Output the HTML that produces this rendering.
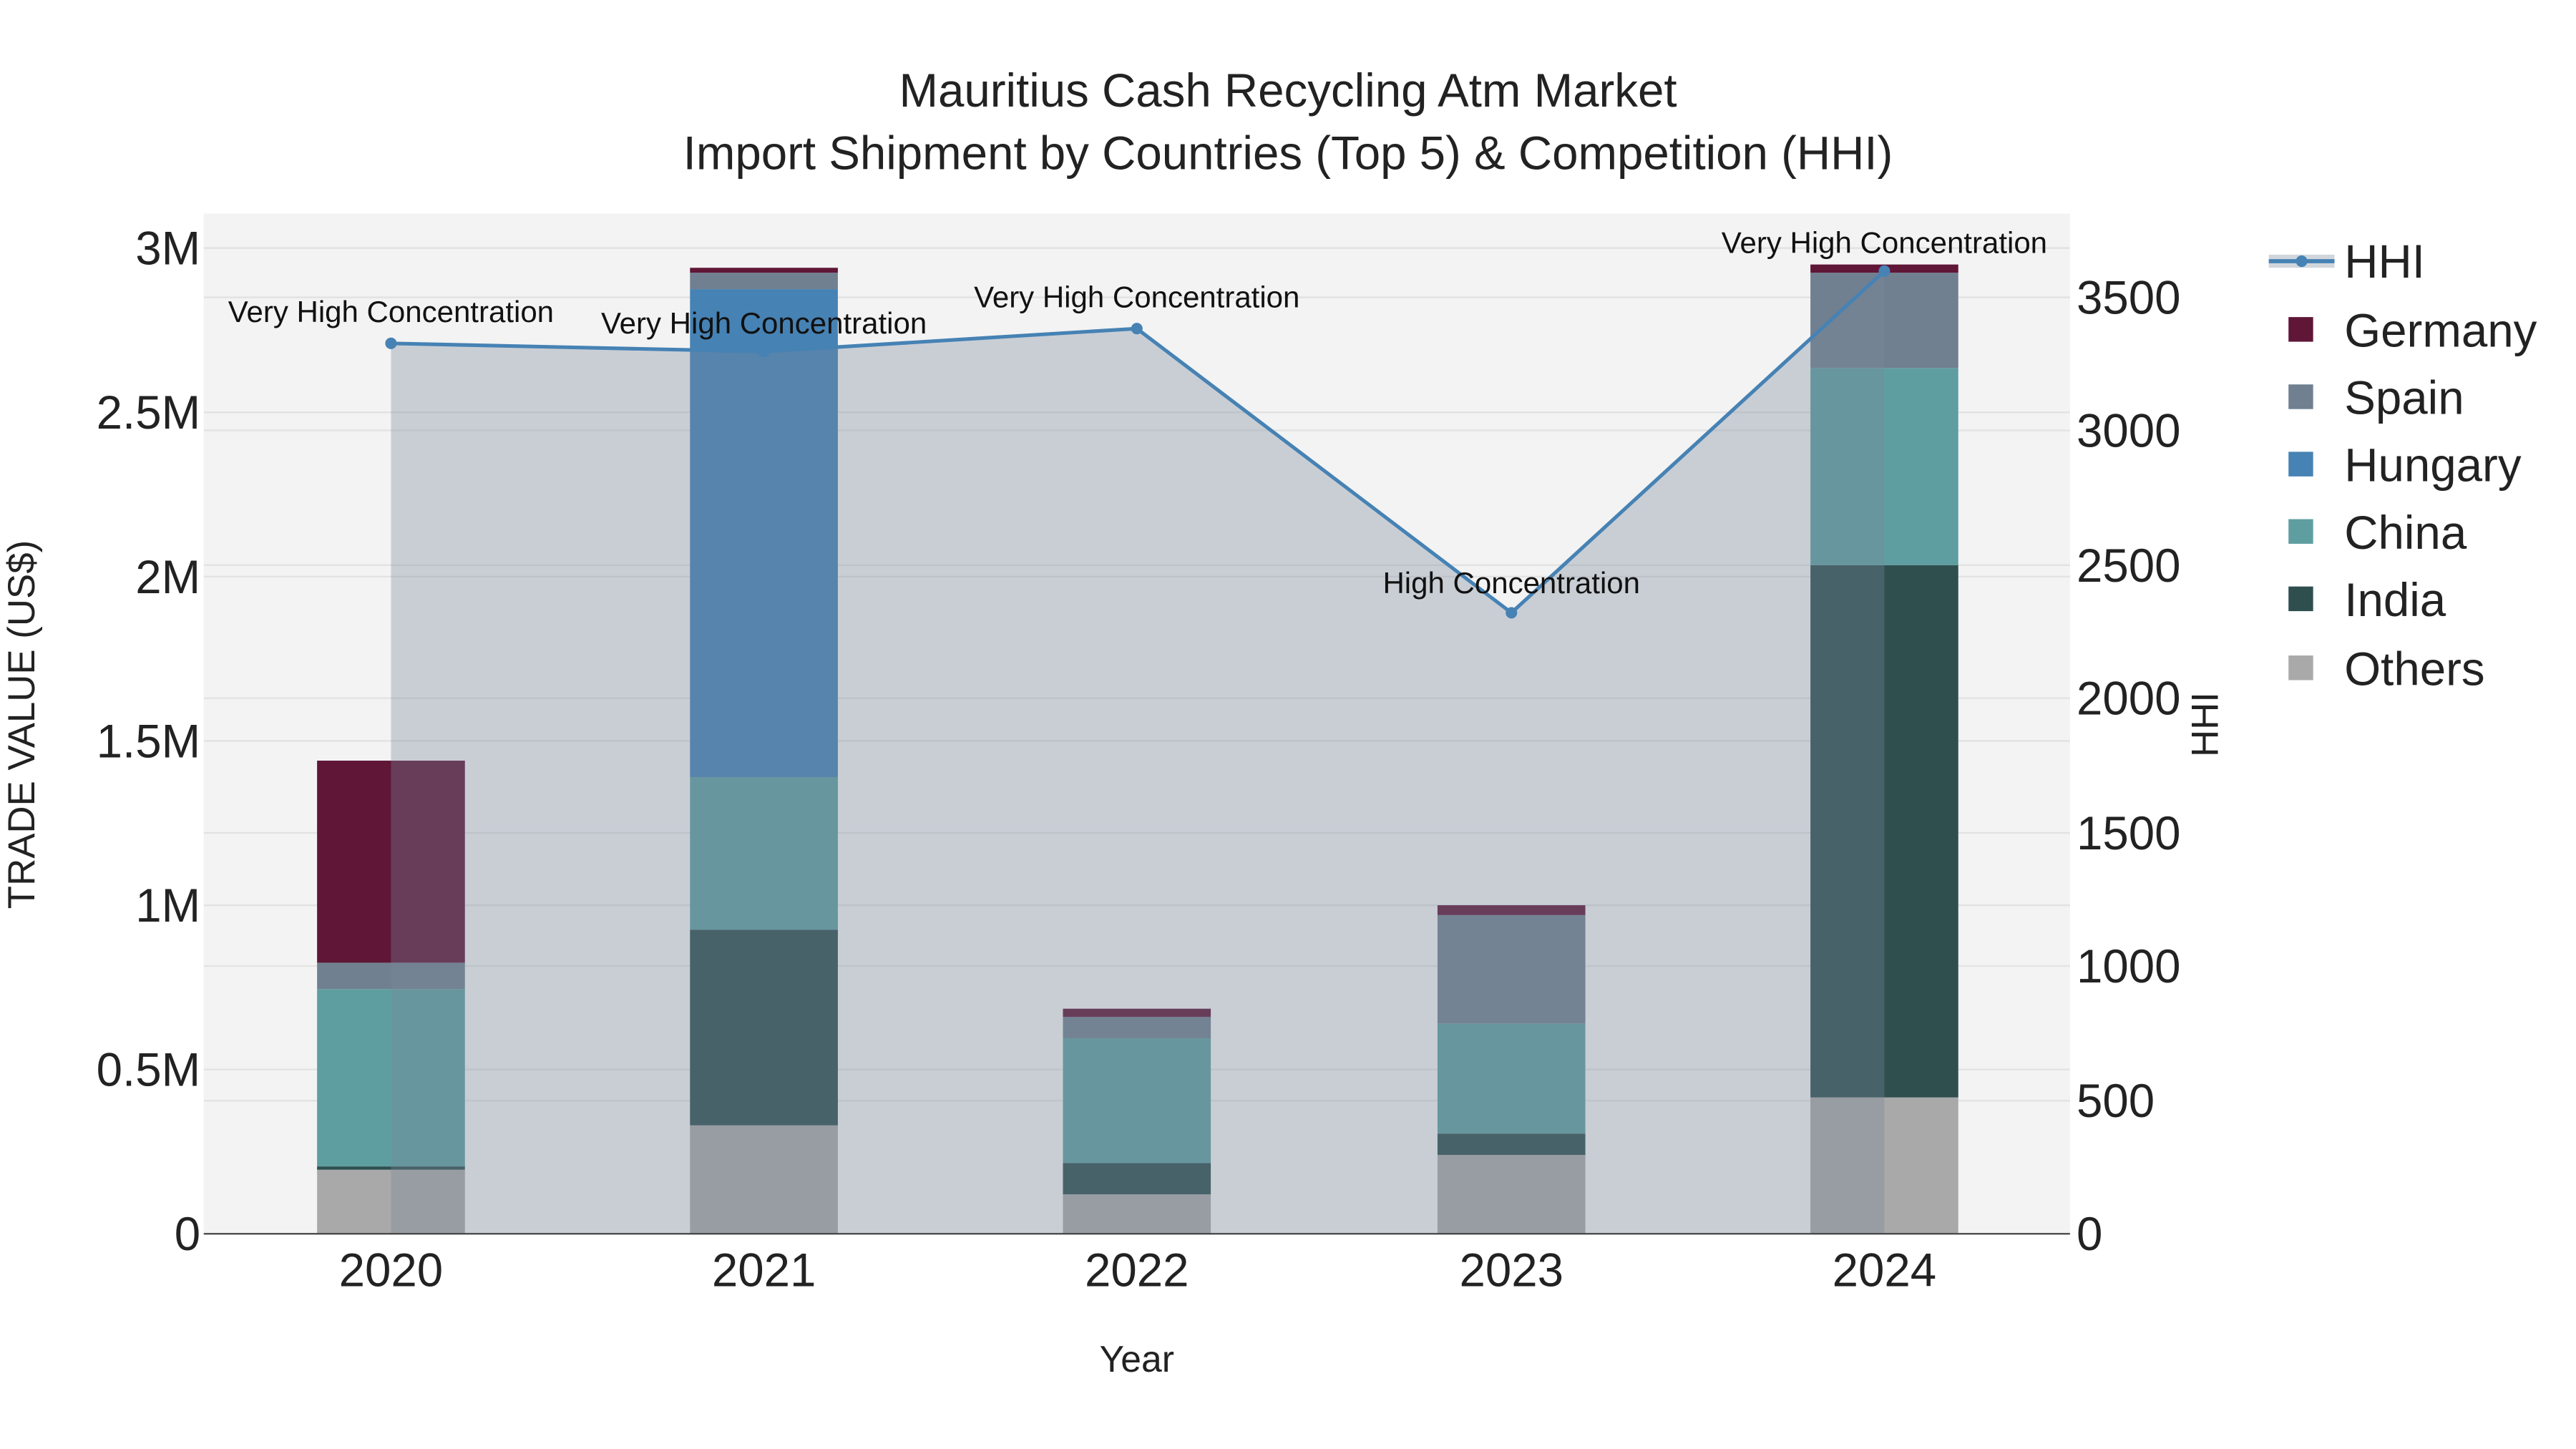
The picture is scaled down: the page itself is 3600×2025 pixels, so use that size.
<!DOCTYPE html>
<html><head><meta charset="utf-8"><style>
html,body{margin:0;padding:0;background:#fff;}
svg{display:block;font-family:"Liberation Sans",Arial,sans-serif;}
</style></head><body>
<svg width="3600" height="2025" viewBox="0 0 1568 882" preserveAspectRatio="none" xmlns="http://www.w3.org/2000/svg">
<rect x="0" y="0" width="1568" height="882" fill="#fff"/>
<rect x="124" y="130" width="1136" height="621" fill="#f3f3f3"/>
<g stroke="#e2e2e2" stroke-width="1">
<line x1="124" x2="1260" y1="651" y2="651"/><line x1="124" x2="1260" y1="551" y2="551"/>
<line x1="124" x2="1260" y1="451" y2="451"/><line x1="124" x2="1260" y1="351" y2="351"/>
<line x1="124" x2="1260" y1="251" y2="251"/><line x1="124" x2="1260" y1="151" y2="151"/>
<line x1="124" x2="1260" y1="670" y2="670"/><line x1="124" x2="1260" y1="588" y2="588"/>
<line x1="124" x2="1260" y1="507" y2="507"/><line x1="124" x2="1260" y1="425" y2="425"/>
<line x1="124" x2="1260" y1="344" y2="344"/><line x1="124" x2="1260" y1="262" y2="262"/>
<line x1="124" x2="1260" y1="181" y2="181"/>
</g>
<g>
<rect x="193" y="712" width="90" height="39" fill="#a9a9a9"/>
<rect x="193" y="710" width="90" height="2" fill="#2f4f4f"/>
<rect x="193" y="602" width="90" height="108" fill="#5f9ea0"/>
<rect x="193" y="586" width="90" height="16" fill="#708090"/>
<rect x="193" y="463" width="90" height="123" fill="#5f1637"/>
<rect x="420" y="685" width="90" height="66" fill="#a9a9a9"/>
<rect x="420" y="566" width="90" height="119" fill="#2f4f4f"/>
<rect x="420" y="473" width="90" height="93" fill="#5f9ea0"/>
<rect x="420" y="176" width="90" height="297" fill="#4682b4"/>
<rect x="420" y="166" width="90" height="10" fill="#708090"/>
<rect x="420" y="163" width="90" height="3" fill="#5f1637"/>
<rect x="647" y="727" width="90" height="24" fill="#a9a9a9"/>
<rect x="647" y="708" width="90" height="19" fill="#2f4f4f"/>
<rect x="647" y="632" width="90" height="76" fill="#5f9ea0"/>
<rect x="647" y="619" width="90" height="13" fill="#708090"/>
<rect x="647" y="614" width="90" height="5" fill="#5f1637"/>
<rect x="875" y="703" width="90" height="48" fill="#a9a9a9"/>
<rect x="875" y="690" width="90" height="13" fill="#2f4f4f"/>
<rect x="875" y="623" width="90" height="67" fill="#5f9ea0"/>
<rect x="875" y="557" width="90" height="66" fill="#708090"/>
<rect x="875" y="551" width="90" height="6" fill="#5f1637"/>
<rect x="1102" y="668" width="90" height="83" fill="#a9a9a9"/>
<rect x="1102" y="344" width="90" height="324" fill="#2f4f4f"/>
<rect x="1102" y="224" width="90" height="120" fill="#5f9ea0"/>
<rect x="1102" y="166" width="90" height="58" fill="#708090"/>
<rect x="1102" y="161" width="90" height="5" fill="#5f1637"/>
</g>
<polygon points="238,751 238,209 465,214 692,200 920,373 1147,165 1147,751" fill="rgb(121,136,156)" fill-opacity="0.345"/>
<line x1="124" x2="1260" y1="751" y2="751" stroke="#444" stroke-width="1"/>
<polyline points="238,209 465,214 692,200 920,373 1147,165" fill="none" stroke="#4682b4" stroke-width="2.2"/>
<g fill="#4682b4"><circle cx="238" cy="209" r="3.5"/><circle cx="465" cy="214" r="3.5"/><circle cx="692" cy="200" r="3.5"/><circle cx="920" cy="373" r="3.5"/><circle cx="1147" cy="165" r="3.5"/></g>
<g font-size="18.3" fill="#111" text-anchor="middle">
<text x="238" y="196">Very High Concentration</text>
<text x="465" y="203">Very High Concentration</text>
<text x="692" y="187">Very High Concentration</text>
<text x="920" y="361">High Concentration</text>
<text x="1147" y="154">Very High Concentration</text>
</g>
<g text-anchor="middle" fill="#222" font-size="28.5">
<text x="784" y="65">Mauritius Cash Recycling Atm Market</text>
<text x="784" y="103">Import Shipment by Countries (Top 5) &amp; Competition (HHI)</text>
</g>
<g font-size="28.5" fill="#222" text-anchor="end">
<text x="122" y="761">0</text><text x="122" y="661">0.5M</text><text x="122" y="561">1M</text>
<text x="122" y="461">1.5M</text><text x="122" y="361">2M</text><text x="122" y="261">2.5M</text><text x="122" y="161">3M</text>
</g>
<g font-size="28.5" fill="#222" text-anchor="start">
<text x="1264" y="761">0</text><text x="1264" y="680">500</text><text x="1264" y="598">1000</text>
<text x="1264" y="517">1500</text><text x="1264" y="435">2000</text><text x="1264" y="354">2500</text>
<text x="1264" y="272">3000</text><text x="1264" y="191">3500</text>
</g>
<g font-size="28.5" fill="#222" text-anchor="middle">
<text x="238" y="783">2020</text><text x="465" y="783">2021</text><text x="692" y="783">2022</text>
<text x="920" y="783">2023</text><text x="1147" y="783">2024</text>
</g>
<text x="692" y="835" font-size="22.5" fill="#222" text-anchor="middle">Year</text>
<text transform="translate(21,441) rotate(-90)" font-size="23" fill="#222" text-anchor="middle">TRADE VALUE (US$)</text>
<text transform="translate(1350,441) rotate(-90)" font-size="23" fill="#222" text-anchor="middle">HHI</text>
<rect x="1381" y="155" width="40" height="8" fill="rgb(121,136,156)" fill-opacity="0.345"/>
<line x1="1381" x2="1421" y1="159" y2="159" stroke="#4682b4" stroke-width="2.5"/>
<circle cx="1401" cy="159" r="3.5" fill="#4682b4"/>
<g font-size="28.5" fill="#222">
<text x="1427" y="169">HHI</text>
<text x="1427" y="211">Germany</text>
<text x="1427" y="252">Spain</text>
<text x="1427" y="293">Hungary</text>
<text x="1427" y="334">China</text>
<text x="1427" y="375">India</text>
<text x="1427" y="417">Others</text>
</g>
<rect x="1393" y="193" width="15" height="15" fill="#5f1637"/>
<rect x="1393" y="234" width="15" height="15" fill="#708090"/>
<rect x="1393" y="275" width="15" height="15" fill="#4682b4"/>
<rect x="1393" y="316" width="15" height="15" fill="#5f9ea0"/>
<rect x="1393" y="357" width="15" height="15" fill="#2f4f4f"/>
<rect x="1393" y="399" width="15" height="15" fill="#a9a9a9"/>
</svg>
</body></html>
